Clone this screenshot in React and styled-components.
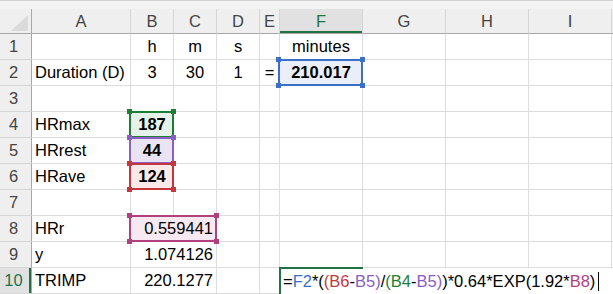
import React from 'react'
import styled, {createGlobalStyle, css} from 'styled-components'

const GREEN = '#217346'

const GlobalStyle = createGlobalStyle`
  html, body {
    margin: 0;
    padding: 0;
    background: #ffffff;
    overflow: hidden;
  }
  body {
    font-family: 'Liberation Sans', Arial, sans-serif;
    font-size: 16.5px;
    color: #000;
  }
`

const TopStrip = styled.div`
  height: 9px;
  box-sizing: border-box;
  background: #f3f3f3;
  border-top: 1px solid #d2d2d2;
`

const Sheet = styled.div`
  display: grid;
  grid-template-columns: 32px 99px 43px 43px 43px 20px 83px 83px 83px 83px 1fr;
  grid-template-rows: 25px repeat(10, 26px);
`

const Corner = styled.div`
  position: relative;
  background: #efefef;
  border-right: 1px solid #a8a8a8;
  border-bottom: 1px solid #a8a8a8;
  &::after {
    content: '';
    position: absolute;
    right: 3px;
    bottom: 2px;
    width: 0;
    height: 0;
    border-left: 17px solid transparent;
    border-bottom: 16px solid #dadada;
  }
`

const ColHead = styled.div`
  display: flex;
  align-items: center;
  justify-content: center;
  background: ${p => (p.$active ? '#e1e1e1' : '#efefef')};
  color: ${p => (p.$active ? GREEN : '#444444')};
  border-right: 1px solid #d6d6d6;
  border-bottom: 1px solid #a8a8a8;
  ${p => p.$active && css`box-shadow: inset 0 -2px 0 ${GREEN};`}
`

const RowHead = styled.div`
  display: flex;
  align-items: center;
  justify-content: center;
  padding-right: 4px;
  background: ${p => (p.$active ? '#e1e1e1' : '#efefef')};
  color: ${p => (p.$active ? GREEN : '#444444')};
  border-right: 1px solid #a8a8a8;
  border-bottom: 1px solid #d6d6d6;
  ${p => p.$active && css`box-shadow: inset -2px 0 0 ${GREEN};`}
`

const Cell = styled.div`
  position: relative;
  display: flex;
  align-items: center;
  justify-content: ${p => p.$align || 'flex-start'};
  padding: 0 3px;
  white-space: nowrap;
  font-weight: ${p => (p.$bold ? 700 : 400)};
  background: ${p => p.$fill || '#ffffff'};
  border-right: 1px solid #dcdcdc;
  border-bottom: 1px solid #dcdcdc;
  grid-column: ${p => p.$span || 'auto'};
`

const RangeBox = styled.div`
  position: absolute;
  top: -1px;
  left: -2px;
  right: -1px;
  bottom: -1px;
  border: 2px solid ${p => p.$color};
  z-index: 2;
  pointer-events: none;
`

const Handle = styled.span`
  position: absolute;
  width: 5px;
  height: 5px;
  background: ${p => p.$color};
  ${p => (p.$v === 'top' ? 'top: -4px;' : 'bottom: -4px;')}
  ${p => (p.$h === 'left' ? 'left: -4px;' : 'right: -4px;')}
`

const Editor = styled.div`
  position: relative;
  grid-column: 7 / -1;
  display: flex;
  align-items: center;
  padding-left: 3px;
  background: #ffffff;
  white-space: nowrap;
  z-index: 2;
  &::before {
    content: '';
    position: absolute;
    top: -1px;
    left: -1px;
    width: 84px;
    height: 2px;
    background: ${GREEN};
  }
  &::after {
    content: '';
    position: absolute;
    top: -1px;
    bottom: 0;
    left: -1px;
    width: 2px;
    background: ${GREEN};
  }
`

const Ref = styled.span`
  color: ${p => p.$color || '#000'};
`

const Caret = styled.span`
  display: inline-block;
  width: 1px;
  height: 19px;
  margin-left: 3px;
  background: #000;
`

const COLORS = {
  blue: {line: '#3b6fc8', fill: '#e9eef8'},
  green: {line: '#1e7e34', fill: '#e6f2e9'},
  purple: {line: '#8a5ec4', fill: '#e9e3f4'},
  red: {line: '#c4373d', fill: '#fbe9e9'},
  magenta: {line: '#b2407f', fill: '#f7e9f1'},
}

const Range = ({color}) => {
  const c = COLORS[color].line
  return (
    <RangeBox $color={c}>
      <Handle $color={c} $v="top" $h="left"/>
      <Handle $color={c} $v="top" $h="right"/>
      <Handle $color={c} $v="bottom" $h="left"/>
      <Handle $color={c} $v="bottom" $h="right"/>
    </RangeBox>
  )
}

const letters = ['A', 'B', 'C', 'D', 'E', 'F', 'G', 'H', 'I', '']

// each row: list of cells {text, align, bold, range, span}
const rows = [
  [{}, {text: 'h', align: 'center'}, {text: 'm', align: 'center'}, {text: 's', align: 'center'}, {}, {text: 'minutes', align: 'center'}, {}, {}, {}, {}],
  [{text: 'Duration (D)'}, {text: '3', align: 'center'}, {text: '30', align: 'center'}, {text: '1', align: 'center'}, {text: '=', align: 'center'}, {text: '210.017', align: 'center', bold: true, range: 'blue'}, {}, {}, {}, {}],
  [{}, {}, {}, {}, {}, {}, {}, {}, {}, {}],
  [{text: 'HRmax'}, {text: '187', align: 'center', bold: true, range: 'green'}, {}, {}, {}, {}, {}, {}, {}, {}],
  [{text: 'HRrest'}, {text: '44', align: 'center', bold: true, range: 'purple'}, {}, {}, {}, {}, {}, {}, {}, {}],
  [{text: 'HRave'}, {text: '124', align: 'center', bold: true, range: 'red'}, {}, {}, {}, {}, {}, {}, {}, {}],
  [{}, {}, {}, {}, {}, {}, {}, {}, {}, {}],
  [{text: 'HRr'}, {text: '0.559441', align: 'flex-end', span: 'span 2', range: 'magenta'}, {}, {}, {}, {}, {}, {}, {}],
  [{text: 'y'}, {text: '1.074126', align: 'flex-end', span: 'span 2'}, {}, {}, {}, {}, {}, {}, {}],
]

const Formula = () => (
  <Editor>
    <Ref>=</Ref>
    <Ref $color={COLORS.blue.line}>F2</Ref>
    <Ref>*(</Ref>
    <Ref $color={COLORS.red.line}>(B6</Ref>
    <Ref>-</Ref>
    <Ref $color={COLORS.purple.line}>B5)</Ref>
    <Ref>/</Ref>
    <Ref $color={COLORS.green.line}>(B4</Ref>
    <Ref>-</Ref>
    <Ref $color={COLORS.purple.line}>B5)</Ref>
    <Ref>)*0.64*EXP(1.92*</Ref>
    <Ref $color={COLORS.magenta.line}>B8</Ref>
    <Ref>)</Ref>
    <Caret/>
  </Editor>
)

const App = () => {
  return (
    <>
      <GlobalStyle/>
      <TopStrip/>
      <Sheet>
        <Corner/>
        {letters.map((l, i) => (
          <ColHead key={i} $active={l === 'F'}>{l}</ColHead>
        ))}
        {rows.map((row, r) => (
          <React.Fragment key={r}>
            <RowHead>{r + 1}</RowHead>
            {row.map((c, i) => (
              <Cell
                key={i}
                $align={c.align}
                $bold={c.bold}
                $span={c.span}
                $fill={c.range ? COLORS[c.range].fill : undefined}
              >
                {c.text}
                {c.range && <Range color={c.range}/>}
              </Cell>
            ))}
          </React.Fragment>
        ))}
        <RowHead $active>10</RowHead>
        <Cell>TRIMP</Cell>
        <Cell $align="flex-end" $span="span 2">220.1277</Cell>
        <Cell/>
        <Cell/>
        <Formula/>
      </Sheet>
    </>
  )
}

export default App
